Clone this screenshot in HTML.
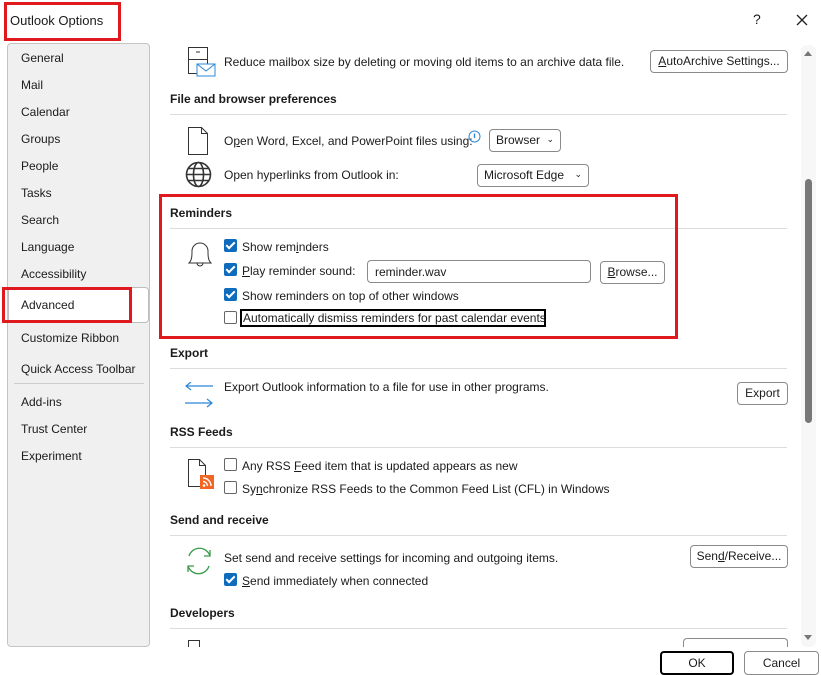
<!DOCTYPE html>
<html><head><meta charset="utf-8"><style>
*{box-sizing:border-box;margin:0;padding:0}
body{width:821px;height:675px;background:#fff;font-family:"Liberation Sans",sans-serif;font-size:12px;color:#1b1b1b;position:relative;overflow:hidden}
.a{position:absolute;white-space:nowrap}
.side{position:absolute;left:7px;top:43px;width:143px;height:604px;background:#f0f0f0;border:1px solid #c4c4c4;border-radius:4px}
.si{position:absolute;left:21px}
.h{position:absolute;left:170px;font-weight:bold;font-size:12px}
.ln{position:absolute;left:170px;width:617px;height:1px;background:#dcdcdc}
.btn{position:absolute;border:1px solid #8a8a8a;border-radius:4px;background:#fff;text-align:center;line-height:21px;height:23px}
.cb{position:absolute;width:13px;height:13px;border-radius:2px}
.on{background:#0f6cbd}
.on::after{content:"";position:absolute;left:4px;top:1px;width:3px;height:7px;border:solid #fff;border-width:0 2px 2px 0;transform:rotate(45deg)}
.off{border:1px solid #666;background:#fff}
.red{position:absolute;border:3px solid #e0191f}
u{text-decoration:underline}
</style></head><body>
<div class="a" style="left:10px;top:13px;font-size:13px">Outlook Options</div>
<div class="red" style="left:4px;top:2px;width:117px;height:39px"></div>
<div class="a" style="left:753px;top:11px;font-size:14px">?</div>
<svg class="a" style="left:796px;top:14px" width="12" height="12"><path d="M1 1L11 11M11 1L1 11" stroke="#222" stroke-width="1.3"/></svg>

<div class="side"></div>
<div class="si a" style="top:51px">General</div>
<div class="si a" style="top:78px">Mail</div>
<div class="si a" style="top:105px">Calendar</div>
<div class="si a" style="top:132px">Groups</div>
<div class="si a" style="top:159px">People</div>
<div class="si a" style="top:186px">Tasks</div>
<div class="si a" style="top:213px">Search</div>
<div class="si a" style="top:240px">Language</div>
<div class="si a" style="top:267px">Accessibility</div>
<div class="a" style="left:8px;top:287px;width:141px;height:36px;background:#fff;border:1px solid #bdbdbd;border-radius:4px"></div>
<div class="si a" style="top:298px">Advanced</div>
<div class="red" style="left:2px;top:287px;width:130px;height:36px"></div>
<div class="si a" style="top:331px">Customize Ribbon</div>
<div class="si a" style="top:362px">Quick Access Toolbar</div>
<div class="a" style="left:14px;top:383px;width:130px;height:1px;background:#ccc"></div>
<div class="si a" style="top:395px">Add-ins</div>
<div class="si a" style="top:422px">Trust Center</div>
<div class="si a" style="top:449px">Experiment</div>

<svg class="a" style="left:187px;top:46px" width="30" height="32"><rect x="1.5" y="1.5" width="19" height="12" fill="none" stroke="#333"/><rect x="1.5" y="13.5" width="19" height="14" fill="none" stroke="#333"/><path d="M9 6h4" stroke="#333"/><rect x="10" y="18" width="18" height="12" fill="#fff" stroke="#2b88d8"/><path d="M10 18l9 7 9-7" fill="none" stroke="#2b88d8"/></svg>
<div class="a" style="left:224px;top:55px">Reduce mailbox size by deleting or moving old items to an archive data file.</div>
<div class="btn a" style="left:650px;top:50px;width:138px"><u>A</u>utoArchive Settings...</div>

<div class="h" style="top:92px">File and browser preferences</div>
<div class="ln" style="top:114px"></div>
<svg class="a" style="left:187px;top:126px" width="24" height="30"><path d="M1.5 1.5h13l6 6v21h-19z M14.5 1.5v6h6" fill="#fff" stroke="#333"/></svg>
<div class="a" style="left:224px;top:134px">O<u>p</u>en Word, Excel, and PowerPoint files using:</div>
<svg class="a" style="left:468px;top:130px" width="13" height="13"><circle cx="6.5" cy="6.5" r="5.5" fill="none" stroke="#2b88d8"/><path d="M6.5 3.5v4.5" stroke="#2b88d8" stroke-width="1.4"/></svg>
<div class="btn a" style="left:489px;top:129px;width:72px;text-align:left;padding-left:6px">Browser<span style="position:absolute;right:6px;top:-1px;font-size:9px">⌄</span></div>
<svg class="a" style="left:185px;top:161px" width="27" height="27"><circle cx="13.5" cy="13.5" r="12" fill="none" stroke="#333" stroke-width="1.6"/><ellipse cx="13.5" cy="13.5" rx="5" ry="12" fill="none" stroke="#333" stroke-width="1.6"/><path d="M1.5 13.5h24M3.5 7.5h20M3.5 19.5h20" stroke="#333" stroke-width="1.6"/></svg>
<div class="a" style="left:224px;top:168px">Open hyperlinks from Outlook in:</div>
<div class="btn a" style="left:477px;top:164px;width:112px;text-align:left;padding-left:6px">Microsoft Edge<span style="position:absolute;right:6px;top:-1px;font-size:9px">⌄</span></div>

<div class="h" style="top:206px">Reminders</div>
<div class="ln" style="top:228px"></div>
<svg class="a" style="left:185px;top:238px" width="30" height="32"><path d="M4 25c3-3 3-7 3-12a8 8 0 0 1 16 0c0 5 0 9 3 12z" fill="none" stroke="#333"/><path d="M12 25a3 3 0 0 0 6 0" fill="none" stroke="#333"/></svg>
<div class="cb on" style="left:224px;top:239px"></div><div class="a" style="left:242px;top:240px">Show rem<u>i</u>nders</div>
<div class="cb on" style="left:224px;top:263px"></div><div class="a" style="left:242px;top:264px"><u>P</u>lay reminder sound:</div>
<div class="a" style="left:367px;top:260px;width:224px;height:23px;border:1px solid #8a8a8a;border-radius:4px;padding:4px 7px">reminder.wav</div>
<div class="btn a" style="left:600px;top:261px;width:65px"><u>B</u>rowse...</div>
<div class="cb on" style="left:224px;top:288px"></div><div class="a" style="left:242px;top:289px">Show reminders on top of other windows</div>
<div class="cb off" style="left:224px;top:311px"></div>
<div class="a" style="left:240px;top:309px;width:306px;border:2px solid #000;padding:0 1px;height:18px;line-height:14px">Automatically dismiss reminders for past calendar events</div>
<div class="red" style="left:159px;top:194px;width:519px;height:145px"></div>

<div class="h" style="top:346px">Export</div>
<div class="ln" style="top:368px"></div>
<svg class="a" style="left:184px;top:382px" width="30" height="26"><path d="M29 4H2M7 0L2 4l5 4M1 21h27M23 17l5 4-5 4" fill="none" stroke="#2b88d8" stroke-width="1.2"/></svg>
<div class="a" style="left:224px;top:380px">Export Outlook information to a file for use in other programs.</div>
<div class="btn a" style="left:737px;top:382px;width:51px">Export</div>

<div class="h" style="top:425px">RSS Feeds</div>
<div class="ln" style="top:447px"></div>
<svg class="a" style="left:187px;top:458px" width="30" height="32"><path d="M1.5 1.5h11l6 6v21h-17z M12.5 1.5v6h6" fill="#fff" stroke="#333"/><rect x="13" y="17" width="14" height="14" fill="#f26522"/><path d="M16 20a8 8 0 0 1 8 8M16 23.5a4.5 4.5 0 0 1 4.5 4.5" fill="none" stroke="#fff" stroke-width="1.4"/><circle cx="17" cy="27.5" r="1.3" fill="#fff"/></svg>
<div class="cb off" style="left:224px;top:458px"></div><div class="a" style="left:242px;top:459px">Any RSS <u>F</u>eed item that is updated appears as new</div>
<div class="cb off" style="left:224px;top:481px"></div><div class="a" style="left:242px;top:482px">Sy<u>n</u>chronize RSS Feeds to the Common Feed List (CFL) in Windows</div>

<div class="h" style="top:513px">Send and receive</div>
<div class="ln" style="top:535px"></div>
<svg class="a" style="left:184px;top:546px" width="30" height="30"><path d="M5 10A11 11 0 0 1 26 10M25 20A11 11 0 0 1 4 20" fill="none" stroke="#3a9b4a" stroke-width="1.3"/><path d="M26 4v6h-6M4 26v-6h6" fill="none" stroke="#3a9b4a" stroke-width="1.3"/></svg>
<div class="a" style="left:224px;top:551px">Set send and receive settings for incoming and outgoing items.</div>
<div class="btn a" style="left:690px;top:545px;width:98px">Sen<u>d</u>/Receive...</div>
<div class="cb on" style="left:224px;top:573px"></div><div class="a" style="left:242px;top:574px"><u>S</u>end immediately when connected</div>

<div class="h" style="top:606px">Developers</div>
<div class="ln" style="top:628px"></div>
<div class="a" style="left:188px;top:640px;width:12px;height:8px;border:1px solid #333;border-bottom:none"></div>
<div class="a" style="left:683px;top:638px;width:105px;height:10px;border:1px solid #8a8a8a;border-bottom:none;border-radius:4px 4px 0 0"></div>
<div class="a" style="left:150px;top:647px;width:671px;height:28px;background:#fff"></div>

<div class="a" style="left:801px;top:45px;width:15px;height:602px;background:#f7f7f7;border-radius:6px"></div>
<svg class="a" style="left:803px;top:49px" width="10" height="8"><path d="M1 7L5 2 9 7z" fill="#777"/></svg>
<div class="a" style="left:805px;top:179px;width:7px;height:244px;background:#787878;border-radius:4px"></div>
<svg class="a" style="left:803px;top:634px" width="10" height="8"><path d="M1 1L5 6 9 1z" fill="#777"/></svg>

<div class="btn a" style="left:660px;top:651px;width:74px;height:24px;border:2px solid #000;line-height:20px">OK</div>
<div class="btn a" style="left:744px;top:651px;width:75px;height:24px;line-height:22px">Cancel</div>
</body></html>
